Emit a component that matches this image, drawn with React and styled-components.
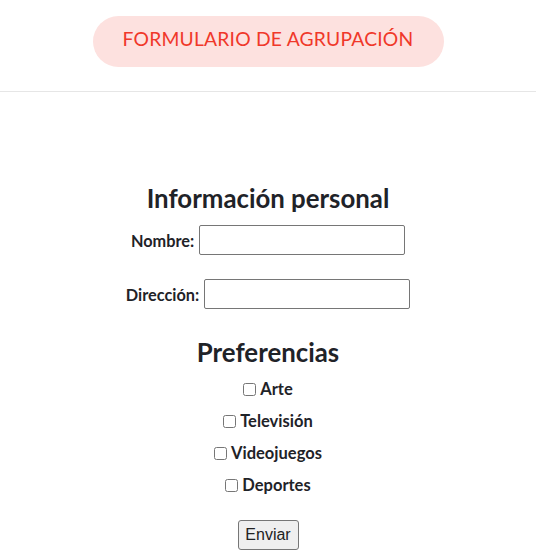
import styled, { createGlobalStyle } from "styled-components";

const GlobalStyle = createGlobalStyle`
  body {
    margin: 0;
    background: #ffffff;
    font-family: Lato, "Open Sans", sans-serif;
    color: #1f2328;
  }
`;

const Header = styled.header`
  display: flex;
  justify-content: center;
  padding: 16px 0 24px;
  border-bottom: 1px solid #e6e6e6;
`;

const TitlePill = styled.h1`
  margin: 0;
  width: 351px;
  height: 51px;
  box-sizing: border-box;
  padding-bottom: 6px;
  display: flex;
  align-items: center;
  justify-content: center;
  border-radius: 26px;
  background: #fde1df;
  color: #f0382a;
  font-size: 19.3px;
  font-weight: 400;
  letter-spacing: 0.2px;
`;

const Form = styled.form`
  display: flex;
  flex-direction: column;
  align-items: center;
  padding-top: 91px;
`;

const SectionTitle = styled.h2`
  margin: ${(p) => p.$top || 0}px 0 0;
  font-size: 25.8px;
  font-weight: 700;
  line-height: 30px;
  color: #1f2328;
`;

const Field = styled.label`
  display: flex;
  align-items: center;
  gap: 5px;
  margin-top: ${(p) => p.$top}px;
  font-size: 16.3px;
  font-weight: 700;
`;

const TextInput = styled.input`
  width: 206px;
  height: 30px;
  box-sizing: border-box;
  border: 1px solid #767676;
  border-radius: 2px;
  padding: 0 4px;
  font-size: 14px;
`;

const Options = styled.div`
  display: flex;
  flex-direction: column;
  align-items: center;
  gap: 13px;
  margin-top: 13px;
`;

const Option = styled.label`
  display: flex;
  align-items: center;
  gap: 4px;
  font-size: 16.5px;
  font-weight: 700;
  line-height: 19px;

  input {
    margin: 0;
    width: 13px;
    height: 13px;
  }
`;

const SubmitButton = styled.button`
  margin-top: 25px;
  width: 61px;
  height: 30px;
  font-family: "Liberation Sans", Arial, sans-serif;
  font-size: 16px;
  color: #222;
  background: #efefef;
  border: 1px solid #767676;
  border-radius: 3px;
  padding: 0;
`;

export default function App() {
  const prefs = ["Arte", "Televisión", "Videojuegos", "Deportes"];

  return (
    <>
      <GlobalStyle />
      <Header>
        <TitlePill>FORMULARIO DE AGRUPACIÓN</TitlePill>
      </Header>

      <Form onSubmit={(e) => e.preventDefault()}>
        <SectionTitle>Información personal</SectionTitle>
        <Field $top={12}>
          Nombre:
          <TextInput type="text" />
        </Field>
        <Field $top={24}>
          Dirección:
          <TextInput type="text" />
        </Field>

        <SectionTitle $top={28}>Preferencias</SectionTitle>
        <Options>
          {prefs.map((p) => (
            <Option key={p}>
              <input type="checkbox" />
              {p}
            </Option>
          ))}
        </Options>

        <SubmitButton type="submit">Enviar</SubmitButton>
      </Form>
    </>
  );
}
